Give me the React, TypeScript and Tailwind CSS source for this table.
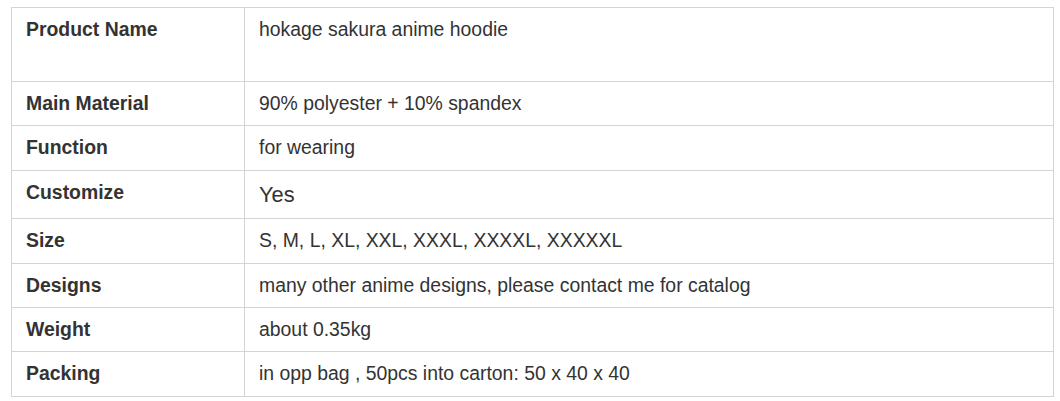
import React from "react";

const rows: { label: string; value: string; h: number; big?: boolean }[] = [
  { label: "Product Name", value: "hokage sakura anime hoodie", h: 74 },
  { label: "Main Material", value: "90% polyester + 10% spandex", h: 44 },
  { label: "Function", value: "for wearing", h: 45 },
  { label: "Customize", value: "Yes", h: 48, big: true },
  { label: "Size", value: "S, M, L, XL, XXL, XXXL, XXXXL, XXXXXL", h: 45 },
  { label: "Designs", value: "many other anime designs, please contact me for catalog", h: 44 },
  { label: "Weight", value: "about 0.35kg", h: 44 },
  { label: "Packing", value: "in opp bag , 50pcs into carton: 50 x 40 x 40", h: 45 },
];

export default function App() {
  return (
    <div className="min-h-screen bg-white pt-[7px] pl-[11px] font-['Liberation_Sans',Arial,sans-serif] text-[#333]">
      <table className="w-[1043px] border-collapse border border-[#d4d4d4] table-fixed">
        <colgroup>
          <col className="w-[233px]" />
          <col />
        </colgroup>
        <tbody>
          {rows.map((r) => (
            <tr key={r.label} style={{ height: r.h }}>
              <td className="border border-[#d4d4d4] align-top pl-[14px] pt-[10px] text-[19.4px] leading-[23px] font-bold">
                {r.label}
              </td>
              <td
                className={
                  r.big
                    ? "border border-[#d4d4d4] align-top pl-[14px] pt-[11px] text-[21.8px] leading-[26px]"
                    : "border border-[#d4d4d4] align-top pl-[14px] pt-[10px] text-[19.4px] leading-[23px]"
                }
              >
                {r.value}
              </td>
            </tr>
          ))}
        </tbody>
      </table>
    </div>
  );
}
